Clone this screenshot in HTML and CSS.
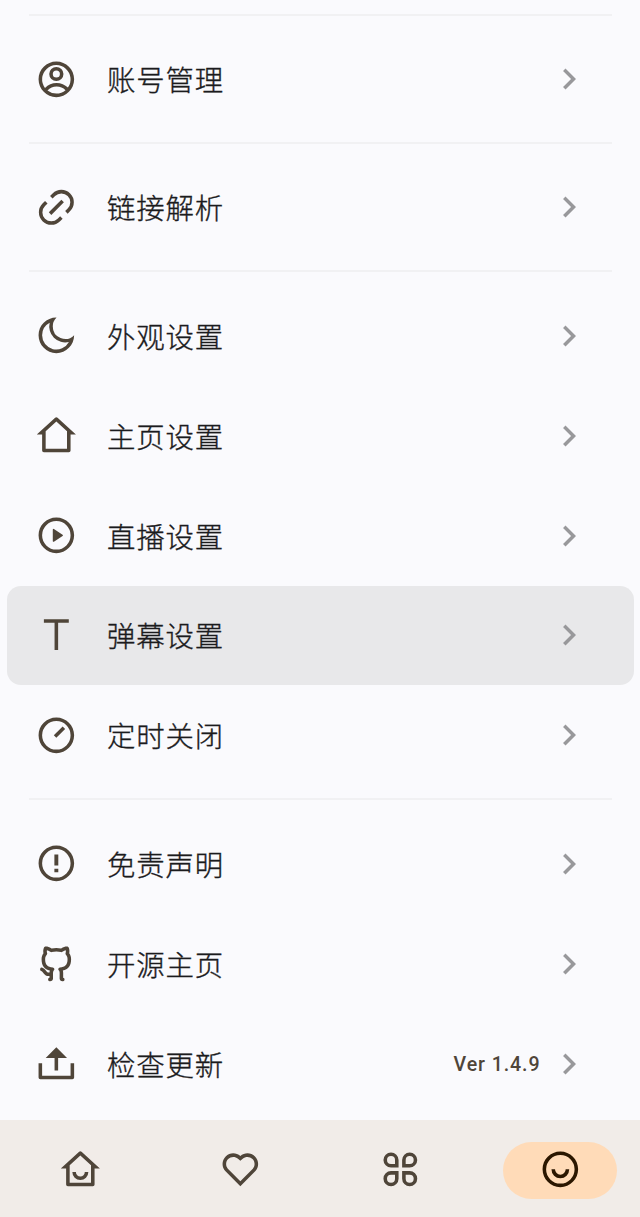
FILE: index.html
```
<!DOCTYPE html>
<html lang="zh-CN">
<head>
    <meta charset="UTF-8">
    <title>我的</title>
    <link rel="stylesheet" href="styles.css">
</head>
<body>
<!-- 公用图标 -->
<svg class="defs">
    <symbol id="arrow" viewBox="0 0 24 24"><path d="M8.59 16.59L13.17 12 8.59 7.41 10 6l6 6-6 6z"/></symbol>
    <symbol id="ring" viewBox="0 0 24 24"><path d="M12 22C6.477 22 2 17.523 2 12S6.477 2 12 2s10 4.477 10 10-4.477 10-10 10zm0-2a8 8 0 1 0 0-16 8 8 0 0 0 0 16z"/></symbol>
    <symbol id="house" viewBox="0 0 24 24"><path d="M19 21.5H5a1 1 0 0 1-1-1v-9H1l10.327-9.388a1 1 0 0 1 1.346 0L23 11.5h-3v9a1 1 0 0 1-1 1zm-13-2h12V9.657l-6-5.454-6 5.454V19.5z"/></symbol>
</svg>

<div class="page">
    <ul class="list">
        <li class="line"></li>
        <li class="item">
            <svg class="icon" viewBox="0 0 24 24"><path d="M12 22C6.477 22 2 17.523 2 12S6.477 2 12 2s10 4.477 10 10-4.477 10-10 10zm-4.987-3.744A7.966 7.966 0 0 0 12 20c1.97 0 3.773-.712 5.167-1.892A6.979 6.979 0 0 0 12.16 16a6.981 6.981 0 0 0-5.147 2.256zM5.616 16.82A8.975 8.975 0 0 1 12.16 14a8.972 8.972 0 0 1 6.362 2.634 8 8 0 1 0-12.906.187zM12 13a4 4 0 1 1 0-8 4 4 0 0 1 0 8zm0-2a2 2 0 1 0 0-4 2 2 0 0 0 0 4z"/></svg>
            <span class="name">账号管理</span>
            <svg class="arrow"><use href="#arrow"/></svg>
        </li>
        <li class="line"></li>
        <li class="item">
            <svg class="icon" viewBox="0 0 24 24"><path d="M18.364 15.536L16.95 14.12l1.414-1.414a5 5 0 1 0-7.071-7.071L9.879 7.05 8.464 5.636 9.88 4.222a7 7 0 0 1 9.9 9.9l-1.415 1.414zm-2.828 2.828l-1.415 1.414a7 7 0 0 1-9.9-9.9l1.415-1.414L7.05 9.88l-1.414 1.414a5 5 0 1 0 7.071 7.071l1.414-1.414 1.415 1.414zm-.708-10.607l1.415 1.415-7.071 7.07-1.415-1.414 7.071-7.07z"/></svg>
            <span class="name">链接解析</span>
            <svg class="arrow"><use href="#arrow"/></svg>
        </li>
        <li class="line"></li>
        <li class="item">
            <svg class="icon" viewBox="0 0 24 24"><path d="M10 7a7 7 0 0 0 12 4.9v.1c0 5.523-4.477 10-10 10S2 17.523 2 12 6.477 2 12 2h.1A6.979 6.979 0 0 0 10 7zm-6 5a8 8 0 0 0 15.062 3.762A9 9 0 0 1 8.238 4.938 7.999 7.999 0 0 0 4 12z"/></svg>
            <span class="name">外观设置</span>
            <svg class="arrow"><use href="#arrow"/></svg>
        </li>
        <li class="item">
            <svg class="icon"><use href="#house"/></svg>
            <span class="name">主页设置</span>
            <svg class="arrow"><use href="#arrow"/></svg>
        </li>
        <li class="item">
            <svg class="icon" viewBox="0 0 24 24"><use href="#ring"/><path d="M10.622 8.415l4.879 3.252a.4.4 0 0 1 0 .666l-4.88 3.252a.4.4 0 0 1-.621-.332V8.747a.4.4 0 0 1 .622-.332z"/></svg>
            <span class="name">直播设置</span>
            <svg class="arrow"><use href="#arrow"/></svg>
        </li>
        <li class="item current">
            <svg class="icon" viewBox="0 0 24 24"><path d="M13 4.9v15.4h-2V4.9H5v-2h14v2z"/></svg>
            <span class="name">弹幕设置</span>
            <svg class="arrow"><use href="#arrow"/></svg>
        </li>
        <li class="item">
            <svg class="icon" viewBox="0 0 24 24"><use href="#ring"/><path d="M15.536 7.05l1.414 1.414-4.95 4.95L10.586 12z"/></svg>
            <span class="name">定时关闭</span>
            <svg class="arrow"><use href="#arrow"/></svg>
        </li>
        <li class="line"></li>
        <li class="item">
            <svg class="icon" viewBox="0 0 24 24"><use href="#ring"/><path d="M10.9 15h2.2v2h-2.2zm0-8h2.2v6.2h-2.2z"/></svg>
            <span class="name">免责声明</span>
            <svg class="arrow"><use href="#arrow"/></svg>
        </li>
        <li class="item">
            <svg class="icon" viewBox="0 0 24 24"><path d="M5.883 18.653c-.3-.2-.558-.455-.86-.816a50.32 50.32 0 0 1-.466-.579c-.463-.575-.755-.84-1.057-.949a1 1 0 0 1 .676-1.883c.752.27 1.261.735 1.947 1.588-.094-.117.34.427.433.539.19.227.33.365.44.438.204.137.587.196 1.15.14.023-.382.094-.753.202-1.095C5.38 15.31 3.7 13.396 3.7 9.64c0-1.24.37-2.356 1.058-3.292-.218-.894-.185-1.975.302-3.192a1 1 0 0 1 .63-.582c.081-.024.127-.035.208-.047.803-.123 1.937.17 3.415 1.096A11.731 11.731 0 0 1 12 3.315c.912 0 1.818.104 2.684.308 1.477-.933 2.613-1.226 3.422-1.096.085.013.157.03.218.05a1 1 0 0 1 .616.58c.487 1.216.52 2.297.302 3.19.691.936 1.058 2.045 1.058 3.293 0 3.757-1.674 5.665-4.642 6.392.125.415.19.879.19 1.38a300.492 300.492 0 0 1-.012 2.716 1 1 0 0 1-.019 1.958c-1.139.228-1.983-.532-1.983-1.525l.002-.446.005-.705c.005-.708.007-1.338.007-1.998 0-.697-.183-1.152-.425-1.36-.661-.57-.326-1.655.54-1.752 2.967-.333 4.337-1.482 4.337-4.66 0-.955-.312-1.744-.913-2.404a1 1 0 0 1-.19-1.045c.166-.414.237-.957.096-1.614l-.01.003c-.491.139-1.11.44-1.858.949a1 1 0 0 1-.833.135A9.626 9.626 0 0 0 12 5.315c-.89 0-1.772.119-2.592.35a1 1 0 0 1-.83-.134c-.752-.507-1.374-.807-1.868-.947-.144.653-.073 1.194.092 1.607a1 1 0 0 1-.189 1.045C6.016 7.89 5.7 8.694 5.7 9.64c0 3.172 1.371 4.328 4.322 4.66.865.097 1.201 1.177.544 1.748-.192.168-.429.732-.429 1.364v3.15c0 .986-.835 1.725-1.96 1.528a1 1 0 0 1-.04-1.962v-.99c-.91.061-1.662-.088-2.254-.485z"/></svg>
            <span class="name">开源主页</span>
            <svg class="arrow"><use href="#arrow"/></svg>
        </li>
        <li class="item">
            <svg class="icon" viewBox="0 0 24 24"><path d="M4 19h16v-7h2v8a1 1 0 0 1-1 1H3a1 1 0 0 1-1-1v-8h2v7zM13 9v7h-2V9H6l6-6 6 6z"/></svg>
            <span class="name">检查更新</span>
            <span class="version">Ver 1.4.9</span>
            <svg class="arrow"><use href="#arrow"/></svg>
        </li>
    </ul>

    <!-- 底部导航 -->
    <div class="nav">
        <a class="tab"><svg class="icon" viewBox="0 0 24 24"><use href="#house"/><path d="M7.5 13.5h2a2.5 2.5 0 1 0 5 0h2a4.5 4.5 0 1 1-9 0z"/></svg></a>
        <a class="tab"><svg class="icon" viewBox="0 0 24 24"><path d="M12.001 4.529c2.349-2.109 5.979-2.039 8.242.228 2.262 2.268 2.34 5.88.236 8.236l-8.48 8.492-8.478-8.492c-2.104-2.356-2.025-5.974.236-8.236 2.265-2.264 5.888-2.34 8.244-.228zm6.826 1.641c-1.5-1.502-3.92-1.563-5.49-.153l-1.335 1.198-1.336-1.197c-1.575-1.412-3.991-1.35-5.494.154-1.49 1.49-1.565 3.875-.192 5.451L12 18.654l7.02-7.03c1.374-1.577 1.299-3.959-.193-5.454z"/></svg></a>
        <a class="tab"><svg class="icon petals" viewBox="0 0 24 24"><path d="M10 10H6.75A3.25 3.25 0 1 1 10 6.75zM14 10V6.75A3.25 3.25 0 1 1 17.25 10zM10 14v3.25A3.25 3.25 0 1 1 6.75 14zM14 14h3.25A3.25 3.25 0 1 1 14 17.25z"/></svg></a>
        <a class="tab on"><svg class="icon" viewBox="0 0 24 24"><use href="#ring"/><path d="M7 12h2a3 3 0 0 0 6 0h2a5 5 0 0 1-10 0z"/></svg></a>
    </div>
</div>
</body>
</html>
```
FILE: styles.css
```
* { margin: 0; padding: 0; box-sizing: border-box;}
ul { list-style: none;}
body {
    background-color: #fafafd;
    color: #1b1b1d;
    font-family: "Noto Sans CJK SC", sans-serif;
}
.defs { display: none;}
.page {
    display: flex;
    flex-direction: column;
    height: 1217px;
    overflow: hidden;
}
.list {
    flex: 1;
    padding: 0.6px 6.5px 0;
}
.line {
    height: 28.5px;
    padding: 13px 22px 0;
}
.line::before {
    content: "";
    display: block;
    height: 2px;
    background-color: #f1f1f3;
}
.item {
    display: flex;
    align-items: center;
    height: 99.9px;
    padding: 0 43.5px 0 28.5px;
    border-radius: 14px;
}
.current { background-color: #e8e8ea;}
.icon {
    width: 42.7px;
    height: 42.7px;
    flex: none;
    fill: #4f4539;
}
.name {
    flex: 1;
    margin-left: 29.2px;
    font-size: 28.4px;
    font-weight: 300;
    line-height: 42px;
    letter-spacing: 0.9px;
    -webkit-text-stroke: 0.35px #1b1b1d;
}
.version {
    margin-right: 7.5px;
    padding-top: 1px;
    color: #4f4539;
    font-family: Roboto, sans-serif;
    font-size: 19.6px;
    font-weight: 500;
    letter-spacing: 0.9px;
}
.arrow {
    width: 42px;
    height: 42px;
    flex: none;
    fill: #98989b;
}
.nav {
    display: flex;
    align-items: center;
    height: 97px;
    padding-top: 3px;
    background-color: #f1ece8;
}
.tab {
    display: flex;
    align-items: center;
    justify-content: center;
    width: 114px;
    height: 57px;
    margin: 0 23px;
    padding-bottom: 1px;
    border-radius: 29px;
}
.on {
    background-color: #ffdbb8;
}
.on .icon { fill: #2b1700;}
.petals {
    fill: none;
    stroke: #4f4539;
    stroke-width: 2;
}
```
